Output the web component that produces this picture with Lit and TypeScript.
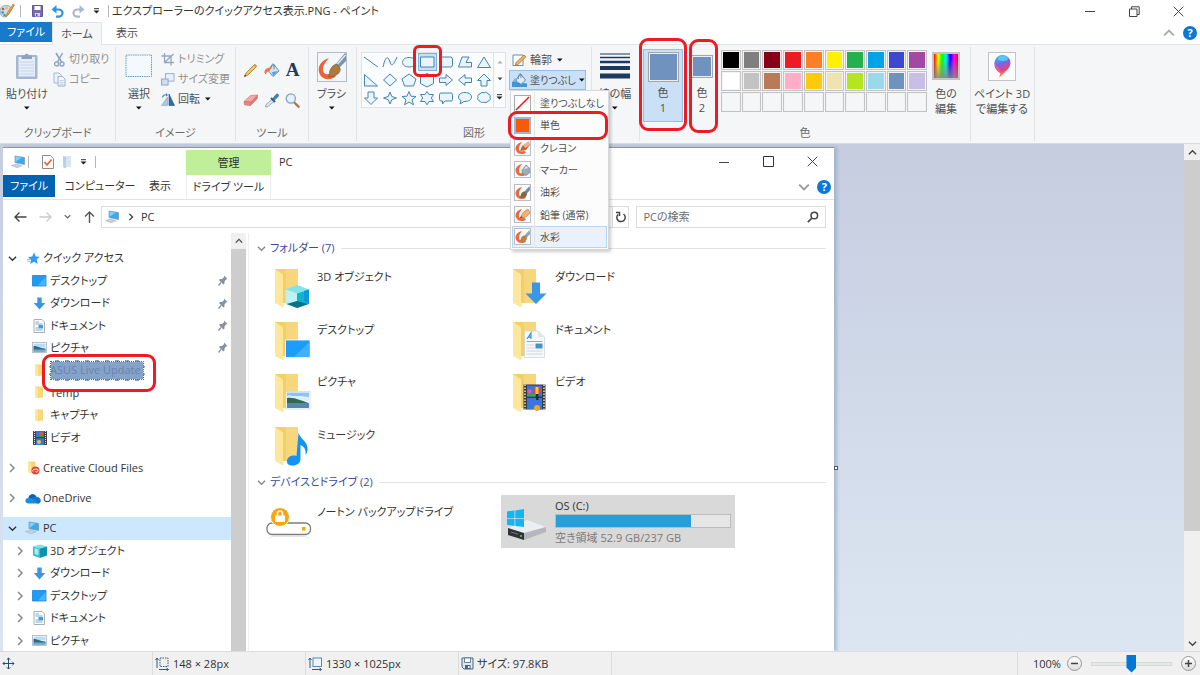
import { LitElement, html, svg, css, nothing, TemplateResult } from "lit";
import { customElement, state } from "lit/decorators.js";
import { classMap } from "lit/directives/class-map.js";
import { styleMap } from "lit/directives/style-map.js";

const icon = (w: number, h: number, body: unknown, vw = w, vh = h) =>
  html`<svg class="ic" width=${w} height=${h} viewBox="0 0 ${vw} ${vh}" fill="none" aria-hidden="true">${body}</svg>`;

const caret = () => icon(6, 4, svg`<path d="M0 .4h5.6L2.8 3.4z" fill="#111"/>`);
const chevron = (dir: "down" | "up" | "right", color: string, s = 8) => {
  const d = { down: "M1 3l4 4 4-4", up: "M1 7l4-4 4 4", right: "M3 1l4 4-4 4" }[dir];
  return icon(s, s, svg`<path d=${d} stroke=${color} stroke-width="1.5"/>`, 10, 10);
};

const paintApp = () => icon(16, 16, svg`
  <path d="M0 8c0-4 3-6 7-5.500 3 .3 5 2 4.500 4.500-.4 2-2.500 1.500-3 3-.4 2-1 4-4 4-3 0-4.500-2.500-4.500-6z" fill="#c9dcea" stroke="#7fa0b8" stroke-width=".8"/>
  <circle cx="3" cy="6" r="1.300" fill="#e04a3a"/><circle cx="6.500" cy="5" r="1.300" fill="#f5b92a"/><circle cx="2.600" cy="9.500" r="1.300" fill="#3b8fdc"/><circle cx="4.500" cy="12" r="1.200" fill="#43a94a"/>
  <path d="M13 1L7.500 9.500l-2 4.500 3.500-3L14.500 2z" fill="#e8993a" stroke="#a86820" stroke-width=".5"/>`);
const save = () => icon(11, 12, svg`
  <path d="M.5.5h10v11H.5z" fill="#7c6bb0" stroke="#64539a"/><path d="M2.500 1h6v4h-6z" fill="#fff"/><path d="M3 8h5v3.500H3z" fill="#d9d4ea"/><path d="M4 9h1.500v2H4z" fill="#64539a"/>`);
const undo = () => icon(13, 13, svg`
  <path d="M2 4.500h5.500a4 3.600 0 010 7.200H5" stroke="#2f94dd" stroke-width="2.200"/><path d="M5.500 0L.5 4.500l5 4z" fill="#2f94dd"/>`);
const redo = () => icon(13, 13, svg`
  <path d="M11 4.500H5.500a4 3.600 0 000 7.200H8" stroke="#a9b9cf" stroke-width="2.200"/><path d="M7.500 0l5 4.500-5 4z" fill="#a9b9cf"/>`);
const menuCaret = () => icon(7, 6, svg`<path d="M1 .7h5" stroke="#333"/><path d="M.5 2.500h6L3.500 5.500z" fill="#222"/>`);
const winMin = () => icon(10, 10, svg`<path d="M0 5.500h10" stroke="#444"/>`);
const winRestore = () => icon(11, 11, svg`<path d="M.5 3h7.500v7.500H.5zM2.500 3V.8h7.700v7.700H8" stroke="#444"/>`);
const winMax = () => icon(11, 11, svg`<path d="M.5.5h10v10H.5z" stroke="#333"/>`);
const winClose = () => icon(11, 11, svg`<path d="M.7.700l9.600 9.600M10.300.7L.7 10.300" stroke="#444"/>`);

const clipboard = () => icon(24, 28, svg`
  <rect x="1" y="3" width="21.500" height="24" rx="1.500" fill="#a5b6d2"/><rect x="3.500" y="5" width="16.500" height="19.500" fill="#e6edf8"/>
  <path d="M6.500 3.500h3a2.300 2.300 0 014.500 0h3V7h-10.500z" fill="#8fa2c0"/>
  <path d="M4.500 10h14.500M4.500 13h14.500M4.500 16h14.500M4.500 19h14.500M4.500 22h14.500" stroke="#c7d5ea"/>`);
const scissors = () => icon(13, 15, svg`
  <path d="M3 1l5.500 9M9.500 1L4.500 10" stroke="#8ba2c3" stroke-width="1.500"/><circle cx="3.600" cy="12" r="2" stroke="#8ba2c3" stroke-width="1.300"/><circle cx="9" cy="12" r="2" stroke="#8ba2c3" stroke-width="1.300"/>`);
const copy = () => icon(13, 15, svg`
  <path d="M1 1h5l2.500 2.500V11H1z" fill="#eef3fa" stroke="#a5b8d3"/><path d="M5 4.500h4.500L12 7v7H5z" fill="#f3f7fc" stroke="#9bb0ce"/><path d="M6.500 8.500h4M6.500 10.500h4M6.500 12.300h4" stroke="#c0cfe4"/>`);
const selectBox = () => icon(28, 24, svg`
  <rect x="1" y="1" width="25.500" height="21.500" fill="#f4f9fe" stroke="#6a9bc4" stroke-dasharray="1.500 .8"/>`);
const crop = () => icon(14, 13, svg`
  <path d="M3.500 0v9.500H13M.5 3h9.500v9.500M4 9L12.500 1" stroke="#90a6c4" stroke-width="1.300"/>`);
const resize = () => icon(14, 13, svg`
  <rect x="4.500" y=".6" width="8.500" height="7.500" fill="#e9f0f9" stroke="#9aafce"/><rect x=".6" y="6" width="6.500" height="6" fill="#d3dff0" stroke="#8fa6c8"/>`);
const rotate = () => icon(14, 13, svg`
  <path d="M6.500 12.500V4L.5 12.500z" fill="#a9c8e2" stroke="#7aa3c6" stroke-width=".6"/><path d="M8 12.500V1l5.500 11.500z" fill="#2f6f9e" stroke="#1d537c" stroke-width=".6"/><path d="M1.500 4.500C2 2 3.500 1.500 5.500 1.800" stroke="#3487c7" stroke-width="1.200"/><path d="M5 0l2 2-2 1.800z" fill="#3487c7"/>`);
const pencil = () => icon(15, 15, svg`
  <path d="M3 10L11.500 1.500l2 2L5 12l-3.500 1.500z" fill="#f0c45c" stroke="#9b7426" stroke-width=".7"/><path d="M11 2l1-1 2 2-1 1z" fill="#d9756c"/><path d="M1.200 13.800l.8-2.300 1.400 1.400z" fill="#333"/>`);
const bucket = () => icon(16, 15, svg`
  <path d="M5.500 5L10 1.500 15 8l-6 5.500L4.500 8z" fill="#d6e6f4" stroke="#4b82ae" stroke-width=".9"/><path d="M7 5.500c0-4 1.500-5 3-4v5" stroke="#587089" stroke-width=".8"/><path d="M.5 10C0 6.500 3.500 4 7.500 5L5 8.500c-2-.5-2.500 1-3 3z" fill="#e87c46"/><path d="M8 9l6-1-5 5z" fill="#4fa0dc"/>`);
const letterA = () => html`<span class="glyph-a">A</span>`;
const eraser = () => icon(16, 14, svg`
  <path d="M1 8.500L7.500 2.500l7-.5L8.500 9z" fill="#f5a8a4" stroke="#c96e6b" stroke-width=".6"/><path d="M1 8.500L8.500 9l-1 3.500-6-.5z" fill="#e98583" stroke="#c96e6b" stroke-width=".6"/><path d="M8.500 9l6-7-.2 3.500-6.800 7z" fill="#d97674" stroke="#c96e6b" stroke-width=".6"/>`);
const dropper = () => icon(16, 15, svg`
  <path d="M8 6.500l2 2-6 5-2.500.5.5-2.500z" fill="#d9e7f2" stroke="#7892a8" stroke-width=".7"/><path d="M7 5l4 4" stroke="#2a628f" stroke-width="2"/><path d="M8.500 6L12 1.500c1.500-1.500 3.500.5 2.200 2L10 7.500z" fill="#3a82bd" stroke="#2a628f" stroke-width=".6"/>`);
const magnifier = () => icon(15, 15, svg`
  <path d="M8.800 9l4.700 4.700" stroke="#a87950" stroke-width="2.400" stroke-linecap="round"/><circle cx="5.800" cy="5.500" r="4.600" fill="#e2f1fb" stroke="#8a9db2" stroke-width="1.200"/>`);
const brush = () => icon(30, 30, svg`
  <rect x=".5" y=".5" width="29" height="29" fill="#f2f6fa" stroke="#b4bcc6"/>
  <path d="M12 6C5 8 .5 14 2 20c1.500 7 10 10 17 4l-4-4c-4 4-8.500 2.500-9-1.500C5.500 14 8 10.500 12 6z" fill="#ee6132"/>
  <path d="M19 12L28 1l1 1v7l-7 7z" fill="#7a93ad"/><path d="M20.500 12l8-9" stroke="#dce8f3" stroke-width="1.500"/>
  <path d="M12 25c0-6 2-11 7-13l4 4c1 4-2 8-11 9z" fill="#ad7a40" stroke="#7b5427" stroke-width=".6"/>`);
const lineWeights = () => icon(30, 27, svg`
  <path d="M0 1h30" stroke="#1e3a5f"/><path d="M0 4.500h30" stroke="#1e3a5f" stroke-width="1.500"/><path d="M0 9h30" stroke="#1e3a5f" stroke-width="2.500"/><path d="M0 15h30" stroke="#1e3a5f" stroke-width="4"/><path d="M0 23h30" stroke="#1e3a5f" stroke-width="5"/>`);
const outline = () => icon(15, 13, svg`
  <path d="M1 1h10v10.500H1z" fill="#fbfdff" stroke="#5c93bd"/><path d="M4 8.500L12 1l2 1.800L6 10.500l-2.700.8z" fill="#f0b552" stroke="#a06e25" stroke-width=".7"/>`);
const fillIcon = () => icon(15, 15, svg`
  <path d="M0 9c3-1.500 6 2 10 1l5 .5V14H0z" fill="#3f96d6"/><path d="M5.500 4.500L9 1.500 13.500 7 9 11.500 4 8z" fill="#dcebf7" stroke="#4b82ae" stroke-width=".9"/><path d="M6.500 6c-.5-4 1-5.500 2.500-5v4" stroke="#587089" stroke-width=".8"/><path d="M1 9c0-3 2-4 4.500-4L4 9z" fill="#76b4e4"/>`);
const rainbow = () => html`<span class="rainbow"></span>`;
const paint3d = () => icon(28, 29, svg`
  <defs><linearGradient id="p3" x1="0" y1="0" x2=".3" y2="1"><stop offset="0" stop-color="#2fd0f5"/><stop offset=".45" stop-color="#6e6be8"/><stop offset=".75" stop-color="#e8417f"/><stop offset="1" stop-color="#fbb117"/></linearGradient></defs>
  <rect x=".5" y=".5" width="27" height="28" fill="#fbfbfb" stroke="#c4c4c4"/><path d="M11 26l1.500-5c-4-2-6.500-6-6-10a8 8 0 0116 0c0 6-6 9-11.500 15z" fill="url(#p3)"/><path d="M6.800 10c2 6 6 6 6.500 12l-.8-1c-4-2-6.500-6-5.700-11z" fill="#ee5a9c"/><ellipse cx="15" cy="6.500" rx="5" ry="2.500" fill="#5eeaf0" opacity=".6"/>`);

const SHAPES: string[] = [
  "M1 2l14 10", "M1 12C4-2 7 3 8 7s3 5 7-5", "M8 2.500c4 0 6.500 2 6.500 4.800S12 12 8 12s-6.500-2-6.500-4.700S4 2.500 8 2.500z",
  "M1.500 2h13.500v10H1.500z", "M4 2h8.500q2 0 2 2v6q0 2-2 2H4q-2 0-2-2V4q0-2 2-2z", "M5 2h7L9 7.500h5.500V12h-13z", "M8 2l6.500 10.500h-13z",
  "M1.500 1.500v11.500h13z", "M8 1l6.500 6L8 13 1.500 7z", "M8 1l7 5-2.500 7h-9L1 6z",
  "M8 .5l6.500 3.500v6.500L8 14l-6.500-3.500V4z", "M1.500 5H8V1.500L14.500 7 8 12.500V9.500H1.500z", "M14.500 5H8V1.500L1.500 7 8 12.500V9.500h6.500z", "M8 1l6.500 6.500H11V13H5V7.500H1.500z",
  "M5 1h6v6h3.500L8 13.500 1.500 7H5z", "M8 1l1.800 4.500L14.500 7 9.800 8.700 8 13 6.200 8.700 1.500 7l4.700-1.500z", "M8 .5l2 4.700 5 .3-4 3.300 1.500 5L8 11l-4.500 2.800 1.500-5-4-3.300 5-.3z",
  "M8 .5l2 3h4.500L12.300 7l2.200 3.500H10l-2 3.300-2-3.300H1.500L3.700 7 1.500 3.500H6z", "M3 2h10q1.500 0 1.500 1.500v5q0 1.500-1.500 1.500H7l-2.500 3V10H3Q1.500 10 1.500 8.500v-5Q1.500 2 3 2z",
  "M8 1.500c4 0 6.500 2 6.500 4.500S12 10.500 8 10.500l-1 0-4 2.500 1-3.500C2.300 8.700 1.500 7.500 1.500 6c0-2.500 2.500-4.500 6.500-4.500z",
  "M4 3c1-2 3-2 4-1 1.500-1.300 3.500-1 4 1 2 0 3 2 2 3.500 1 1.500 0 3.500-2 3.500-1 2-3 2-4 1-2 1-3.500.5-4-1-2 0-3-2-2-3.500C1 5 2 3 4 3z",
];
const shapeIcon = (d: string) => icon(16, 15, svg`<path d=${d} stroke="#4384b3" fill="#eaf5fb" stroke-width="1"/>`);

const PALETTE = ["#000000", "#7f7f7f", "#880015", "#ed1c24", "#ff7f27", "#fff200", "#22b14c", "#00a2e8", "#3f48cc", "#a349a4",
  "#ffffff", "#c3c3c3", "#b97a57", "#ffaec9", "#ffc90e", "#efe4b0", "#b5e61d", "#99d9ea", "#7092be", "#c8bfe7"];

const stroke = (tip: unknown) => icon(17, 17, svg`<rect x=".5" y=".5" width="16" height="16" fill="#fbfbfb" stroke="#b9bec5"/><path d="M8 3C3 4 .5 8 2 11.500c1.500 4 7 4.500 10 2l-2-2c-2 1.500-4.500 1-5-1C4.500 8 6 5.500 8 3z" fill="#e86a3e"/>${tip}`);
const FILLS: { label: string; art: TemplateResult }[] = [
  { label: "塗りつぶしなし", art: icon(17, 17, svg`<rect x=".5" y=".5" width="16" height="16" fill="#fff" stroke="#a9a9a9"/><path d="M2 15L15 2" stroke="#ed1c24" stroke-width="1.600"/>`) },
  { label: "単色", art: icon(17, 17, svg`<rect x="1" y="1" width="15" height="15" fill="#f85a08" stroke="#9db8d6" stroke-width="2"/>`) },
  { label: "クレヨン", art: stroke(svg`<path d="M6 12l2-5 6-4 2 3-4 5z" fill="#c5603a"/><path d="M9 6.500l6-4.500 1 4-4.500 3z" fill="#e9b48d"/>`) },
  { label: "マーカー", art: stroke(svg`<path d="M8 9l4-5 3.500 3v5l-3.500 2.500-4-2z" fill="#9eacba" stroke="#6f7d8b" stroke-width=".6"/><path d="M10 8l2-3 2 2z" fill="#e3e9ee"/>`) },
  { label: "油彩", art: stroke(svg`<path d="M10.500 7.500L15.500 2l.5 4-3.500 4z" fill="#6f8aa5"/><path d="M6 14c1-5 2-6.500 5-6.500l2 2c0 3-2 4.500-7 4.500z" fill="#7d6a4d"/>`) },
  { label: "鉛筆 (通常)", art: stroke(svg`<path d="M6 12.500l3-6L14 3l2 4-4 4z" fill="#efb277" stroke="#b8743a" stroke-width=".6"/><path d="M6 12.500l1.200-2.500 1.500 1.500z" fill="#6b4426"/>`) },
  { label: "水彩", art: stroke(svg`<path d="M10.500 7.500L15.500 2l.5 4-3.500 4z" fill="#8aa4be"/><path d="M6 14c1-5 2-6.500 5-6.500l2 2c0 3-2 4.500-7 4.500z" fill="#b98048"/>`) },
];

const pc = () => icon(16, 14, svg`
  <path d="M4 1l9.500 1.500v7L4 7.500z" fill="#3aaaf0" stroke="#7895ab" stroke-width=".7"/><path d="M4.500 1.500l6 1-6 4.500z" fill="#7fd0fa"/><path d="M.5 10.500l5-1.500 5.500 1.800-5 2z" fill="#c9d2da" stroke="#9ba8b3" stroke-width=".5"/>`);
const checkDoc = () => icon(12, 14, svg`
  <path d="M.5.5h8l3 3v10H.5z" fill="#fff" stroke="#8b8b8b"/><path d="M2.500 7l2.500 3 4.500-5.500" stroke="#e8622c" stroke-width="1.700"/>`);
const paleFolder = () => icon(10, 14, svg`<path d="M1 1h8v11H4z" fill="#d8e5f2"/><path d="M1 1l3 1.500v11L1 12z" fill="#b9cfe6"/>`);
const arrow = (dir: string, c: string) => icon(13, 12, svg`<path d=${dir === "up" ? "M6.500 12V1M2 5.500L6.500 1 11 5.500" : dir === "left" ? "M12.500 6H1M5.500 1.500L1 6l4.500 4.500" : "M.5 6H12M7.500 1.500L12 6l-4.500 4.500"} stroke=${c} stroke-width="1.400"/>`);
const refresh = () => icon(12, 12, svg`<path d="M3 3.500a4.200 4.200 0 105.500-.5M1 1.500h3.500V5" stroke="#444" stroke-width="1.500"/>`);
const search = () => icon(12, 12, svg`<circle cx="7.300" cy="4.500" r="3.300" stroke="#444" stroke-width="1.500"/><path d="M5 7L.8 11.200" stroke="#444" stroke-width="1.700"/>`);
const star = () => icon(13, 13, svg`<path d="M7 .5l1.700 4 4 .2-3 2.800 1 4.500L7 9.800l-3.800 2.200L4 8 1 5l4.200-.4z" fill="#2c9df0"/><path d="M0 7.500h3M.5 9.500h2.500" stroke="#7cc4f6"/>`);
const desktop = () => icon(15, 12, svg`<path d="M.5.5h13.500v10.500H.5z" fill="#1f9bf5" stroke="#1784d8" stroke-width=".8"/><path d="M6 10.500L13.500 2v8.500z" fill="#4cb5ff"/>`);
const download = () => icon(13, 13, svg`<path d="M4.300.5h4.400v5.500h3.600L6.500 12.500.7 6h3.600z" fill="#3a95e4"/>`);
const doc = () => icon(13, 14, svg`<path d="M1 .5h8L11.500 3v10.500H1z" fill="#fdfdfd" stroke="#9a9a9a" stroke-width=".8"/><path d="M2.500 3h3.500M2.500 5h7M2.500 11h7M2.500 9h3" stroke="#6fb1de"/><path d="M5.500 6h4.500v3.500H5.500z" fill="#4c98cf"/>`);
const picture = () => icon(15, 11, svg`<rect x=".5" y=".5" width="14" height="10" fill="#fff" stroke="#a9b4bd" stroke-width=".8"/><path d="M1.500 1.500h12v4h-12z" fill="#b6dcf6"/><path d="M1.500 4c4 0 6 2 12 2.500v3h-12z" fill="#2c6b85"/><path d="M1.500 7.500h12v2h-12z" fill="#74a8d2"/>`);
const folder = () => icon(11, 13, svg`<path d="M1 .5h8v11L4 12z" fill="#f8d775"/><path d="M1 .5l3 1.500v10.500L1 11.500z" fill="#fbe69e"/>`);
const video = () => icon(14, 14, svg`<rect width="14" height="14" fill="#444"/><path d="M1.500 0v14M12.500 0v14" stroke="#ddd" stroke-dasharray="1 1"/><path d="M3 0h8v6H3zM3 7.500h8V14H3z" fill="#3778d6"/><circle cx="8" cy="3" r="2" fill="#e9542e"/><circle cx="6" cy="11" r="2" fill="#f2c22f"/><path d="M7 4h3v2H7z" fill="#3a9b4a"/>`);
const ccFolder = () => icon(13, 14, svg`<path d="M1 .5h7.500v11L4 12z" fill="#f8d775"/><path d="M1 .5l3 1.500v10.500L1 11.500z" fill="#fbe69e"/><circle cx="8.500" cy="9.500" r="4" fill="#e2463a"/><path d="M6 10.500a1.500 1.500 0 012-2c1-1 3-.5 3 1s-1.500 2-2.500 1" stroke="#fff" stroke-width=".9"/>`);
const cloud = () => icon(16, 11, svg`<path d="M4 10.500C-1 10.500-.5 5 3.500 5 4 1 9.500-.5 11.500 4c5 0 5.500 6.500 1 6.500z" fill="#1490df"/><path d="M3.500 5C4 1 9.500-.5 11.500 4c-2 0-3 .5-4 1.500C6.500 5 5 4.700 3.500 5z" fill="#0a5fb4"/><path d="M11.500 4c5 0 5.500 6.500 1 6.500L7.500 5.500c1-1 2-1.500 4-1.500z" fill="#1478cf"/>`);
const cube = () => icon(14, 14, svg`<path d="M0 2.500L7 .5l7 2-7 2z" fill="#7fe0ea"/><path d="M0 2.500l7 2V14l-7-2.500z" fill="#35bccb"/><path d="M14 2.500l-7 2V14l7-2.500z" fill="#0d93ae"/><path d="M1.500 4l4 1.200v6L1.500 10z" fill="#a5edf3"/>`);
const pin = () => icon(10, 11, svg`<path d="M6 .5L9.500 4 8 4.500 6.500 6.500v2L5.300 9.500 1 5l1-1h2l2-1.700z" fill="#86929d"/><path d="M3 7.500L.5 10.500" stroke="#86929d" stroke-width="1.200"/>`);

const bigFolder = (overlay: unknown) => icon(38, 40, svg`
  <path d="M1 0h23v34H8z" fill="#f3cf69"/><path d="M12 0h12v34H12z" fill="#f7d67c"/><path d="M1 0l8 5.500v33L1 34z" fill="#fde79b"/><path d="M9 34.500v4l2.500-4z" fill="#eee"/>${overlay}`);
const BIG: Record<string, unknown> = {
  cube: svg`<path d="M11.500 20.500L23 16l12 4.500-12 4z" fill="#7fe4ec"/><path d="M11.500 20.500l11.500 4V39l-11.500-4z" fill="#bff0f2"/><path d="M35 20.500l-12 4V39l12-4z" fill="#0fb4cf"/><path d="M12.500 35L23 32l11 3-11 4z" fill="#0a7285"/><path d="M35 20.500l-5 1.500v10l5 2.500z" fill="#0b99dc"/>`,
  desktop: svg`<path d="M11.500 18h24.500v17.500H11.500z" fill="#1c9dfb" stroke="#fff" stroke-width=".8"/><path d="M20 35L35.500 20v15z" fill="#41b0ff"/>`,
  picture: svg`<path d="M12 17.500h24v17.500H12z" fill="#fff" stroke="#ccd5dc" stroke-width=".7"/><path d="M13 18.500h22v8H13z" fill="#8fc2f1"/><path d="M13 22c2-1 4-1 5 0h9l8 1v4H13z" fill="#dbeefa"/><path d="M13 24c8-1 14 3 22 5H13z" fill="#2f6a51"/><path d="M13 29h22v5H13z" fill="#5586b5"/>`,
  music: svg`<path d="M24.500 5.500c1 6 9.500 9 9 16.500 0 3-1 5-2 6 1-7-3-9-5-10v14c0 4-3.500 6.500-8 6.500-4 0-6-2-5.500-5 .5-4 6-6 9.500-4.500z" fill="#1293f5"/>`,
  download: svg`<path d="M20 13.500h8v11h6.500L24 35 13.500 24.500H20z" fill="#3a96e6"/>`,
  doc: svg`<path d="M12.500 9h13.500l6.500 6v20.500h-20z" fill="#f6f9fb" stroke="#c9d1d7" stroke-width=".7"/><path d="M26 9v6h6.500z" fill="#dde5eb"/><path d="M15 17l4-6v6M16.500 15h3" stroke="#3d9be0" stroke-width="1.300"/><path d="M14.500 19.500h16" stroke="#6fb6e8"/><path d="M14.500 23h8M14.500 26h8M14.500 29h16M14.500 32h16" stroke="#cfd6db"/><path d="M23.500 21.500h7v5h-7z" fill="#4594c6"/>`,
  video: svg`<path d="M11.500 10.500h22v25h-22z" fill="#393939"/><path d="M13 10.500v25M32 10.500v25" stroke="#e3e3e3" stroke-width="1.500" stroke-dasharray="1.500 1.500"/><path d="M15 11.500h15v11H15zM15 24h15v11H15z" fill="#3b76e0"/><circle cx="25" cy="16.500" r="3.800" fill="#e8442a"/><path d="M23.500 13h3v7h-3z" fill="#f7cf34"/><circle cx="17.500" cy="17.500" r="2.200" fill="#e05ca8"/><path d="M15 20h8v2.500h-8z" fill="#3ca550"/><path d="M24 20h2.500v6H24z" fill="#2c2c2c"/><circle cx="25" cy="34" r="3" fill="#f0a62a"/>`,
};
const lockDrive = () => icon(46, 32, svg`
  <rect x="1" y="16" width="43.500" height="11.500" rx="5" fill="#fff" stroke="#7d7d7d" stroke-width="1.300"/><circle cx="14" cy="10" r="9.500" fill="#f8a50f" stroke="#fff"/><path d="M9 8.500h10V15H9z" fill="#fff"/><path d="M11.500 9V6.500a2.500 2.500 0 015 0V9" stroke="#fff" stroke-width="1.500"/><rect x="36" y="20" width="3.500" height="3.500" fill="#f8a50f"/><path d="M3 31l3-1.500h33l4 1.500" stroke="#e4e4e4"/>`);
const osDrive = () => icon(40, 32, svg`
  <path d="M1 19l19-8 19 7-22 7z" fill="#eceef1"/><path d="M1 19l16 5v7L1 26z" fill="#303438"/><path d="M17 24l22-6v5L17 31z" fill="#b4b8be"/><path d="M4 23l7 2.200" stroke="#777"/><circle cx="14" cy="27" r="1" fill="#49e040"/>
  <path d="M0 2.500l7.500-1V9H0zM8.300 1.400L17 0v9H8.300zM0 9.800h7.500v7.100L0 16zM8.300 9.800H17V18l-8.700-1z" fill="#12b7f2"/>`);

const moveIcon = () => icon(13, 13, svg`<path d="M6.500 1v11M1 6.500h11M4.800 2.700L6.500 1l1.700 1.700M4.800 10.300L6.500 12l1.700-1.700M2.700 4.800L1 6.500l1.700 1.700M10.300 4.800L12 6.500l-1.700 1.700" stroke="#2c4a6a"/>`);
const selSize = () => icon(15, 14, svg`<path d="M2 11V1M.5 3L2 1l1.500 2M4 12.500h9.500M11.500 11l2 1.500-2 1.500" stroke="#3a5878"/><rect x="5" y="1" width="8" height="8.500" stroke="#3a5878" stroke-dasharray="1.500 1"/>`);
const imgSize = () => icon(15, 14, svg`<path d="M2 11V1M.5 3L2 1l1.500 2M4 12.500h9.500M11.500 11l2 1.500-2 1.500" stroke="#3a5878"/><rect x="5" y="1" width="8.500" height="8.500" fill="#eaf5fc" stroke="#5c89ad"/>`);
const disk = () => icon(13, 13, svg`<path d="M1 1h11v11H3L1 10z" fill="#dbe7f1" stroke="#4a6480"/><path d="M3.500 1h6v4.500h-6z" fill="#fff" stroke="#4a6480" stroke-width=".8"/><path d="M4 8h5.500v4H4z" fill="#4a6480"/><path d="M7 9h1.500v2H7z" fill="#fff"/>`);

interface NavRow { label: string; art: () => TemplateResult; pinned?: boolean; level?: number; open?: boolean; closed?: boolean; current?: boolean; covered?: boolean }
const NAV: NavRow[][] = [
  [
    { label: "クイック アクセス", art: star, open: true },
    { label: "デスクトップ", art: desktop, level: 1, pinned: true },
    { label: "ダウンロード", art: download, level: 1, pinned: true },
    { label: "ドキュメント", art: doc, level: 1, pinned: true },
    { label: "ピクチャ", art: picture, level: 1, pinned: true },
    { label: "ASUS Live Update", art: folder, level: 1, covered: true },
    { label: "Temp", art: folder, level: 1 },
    { label: "キャプチャ", art: folder, level: 1 },
    { label: "ビデオ", art: video, level: 1 },
  ],
  [{ label: "Creative Cloud Files", art: ccFolder, closed: true }],
  [{ label: "OneDrive", art: cloud, closed: true }],
  [
    { label: "PC", art: pc, open: true, current: true },
    { label: "3D オブジェクト", art: cube, level: 1, closed: true },
    { label: "ダウンロード", art: download, level: 1, closed: true },
    { label: "デスクトップ", art: desktop, level: 1, closed: true },
    { label: "ドキュメント", art: doc, level: 1, closed: true },
    { label: "ピクチャ", art: picture, level: 1, closed: true },
  ],
];
const FOLDERS: [string, string][] = [
  ["3D オブジェクト", "cube"], ["ダウンロード", "download"], ["デスクトップ", "desktop"], ["ドキュメント", "doc"],
  ["ピクチャ", "picture"], ["ビデオ", "video"], ["ミュージック", "music"],
];

const base = css`
  * { box-sizing: border-box; }
  button, input { font: inherit; font-feature-settings: inherit; color: inherit; border: 0; background: none; margin: 0; padding: 0; border-radius: 0; }
  button { display: flex; align-items: center; justify-content: center; white-space: nowrap; }
  .ic { display: block; flex: none; }
  .mark { position: absolute; border: 3px solid #ed1c24; border-radius: 9px; pointer-events: none; z-index: 5; }
  .help { width: 14px; height: 14px; border-radius: 50%; background: #0a78d7; color: #fff; font-weight: 700; line-height: 14px; }
  .sep { width: 1px; height: 12px; background: #b5b5b5; }
  .grow { flex: 1; }
  .scroll { display: flex; flex-direction: column; align-items: stretch; background: #f0f0f0; }
  .scroll button { height: 16px; }
  .thumb { background: #cdcdcd; }
`;

@customElement("file-explorer")
export class FileExplorer extends LitElement {
  static styles = [base, css`
    :host { display: flex; flex-direction: column; background: #fff; color: #333; min-height: 0; border-top: 1px solid #8f97a5; }
    .top { display: grid; grid-template-columns: 183px 85px 1fr; grid-template-rows: 27px 24px; border-bottom: 1px solid #e3e3e3; }
    .quick { display: flex; align-items: center; gap: 8px; padding-left: 8px; }
    .quick .first { margin: 0 5px 0 -7px; }
    .manage { background: #bff099; margin-top: 2px; }
    .caption { display: flex; align-items: center; padding-left: 8px; }
    .win { width: 44px; height: 26px; }
    .tabs { display: flex; align-items: stretch; }
    .tabs button { margin-bottom: 2px; }
    .file { width: 52px; background: #0163b1; color: #fff; }
    .tab-computer { width: 90px; }
    .tab-view { width: 30px; }
    .drive { border: 1px solid #ececec; border-width: 0 1px; }
    .aside { display: flex; align-items: center; justify-content: flex-end; gap: 7px; padding: 0 3px 0 0; }
    .address { display: flex; align-items: center; height: 33px; padding: 0 8px 0 11px; gap: 11px; }
    .path { flex: 1; display: flex; align-items: center; height: 22px; border: 1px solid #dcdcdc; padding-left: 3px; gap: 6px; }
    .path .reload { width: 16px; height: 20px; border-left: 1px solid #dcdcdc; }
    .nav-btns { display: flex; align-items: center; gap: 12px; width: 76px; }
    .find { display: flex; align-items: center; width: 190px; height: 22px; border: 1px solid #dcdcdc; padding: 0 6px; margin-left: -4px; }
    .find input { flex: 1; min-width: 0; outline: 0; }
    .find input::placeholder { color: #6d6d6d; opacity: 1; }
    .body { flex: 1; display: flex; min-height: 0; }
    nav { width: 228px; display: flex; flex-direction: column; gap: 8px; padding-top: 14px; overflow: hidden; }
    .block { display: grid; grid-auto-rows: 1fr; flex: none; }
    .block-9 { height: 202px; } .block-1 { height: 22px; } .block-6 { height: 135px; }
    .row { display: flex; align-items: center; gap: 2px; padding-left: 4px; position: relative; }
    .row.level { padding-left: 12px; }
    .row.current { background: #cce8ff; }
    .twist { width: 10px; display: flex; justify-content: center; margin-right: 6px; }
    .level .twist { margin-right: 4px; }
    .slot { width: 16px; display: flex; justify-content: center; }
    .level .slot { width: 17px; }
    .row a, .tile a { color: inherit; text-decoration: none; white-space: nowrap; }
    .pin { margin-left: auto; margin-right: 3px; }
    .cover { position: absolute; left: 46px; top: 1px; width: 96px; height: 21px; background: #7092bed9; border: 2px dashed #fff; outline: 1px dotted #2e6fb5; outline-offset: -2px; }
    .row .mark { left: 39px; right: 75px; top: -5px; bottom: -10px; }
    .side-scroll { width: 15px; }
    .side-scroll .thumb { flex: 1; }
    main { flex: 1; border-left: 1px solid #f0f0f0; margin-left: 2px; padding: 5px 8px 0 8px; }
    .head { display: flex; align-items: center; gap: 4px; height: 20px; color: #3a4a9b; font-weight: 400; font-size: 11px; margin: 0; }
    .head .rule { flex: 1; height: 1px; background: #e2e2e2; margin-left: 2px; }
    .tiles { display: grid; grid-template-columns: 234px 234px; gap: 0 4px; padding-left: 6px; margin-top: 4px; grid-auto-rows: 1fr; }
    .folders { height: 210px; }
    .drives { height: 53px; margin-top: 3px; }
    .tile { display: flex; align-items: flex-start; padding: 7px 4px 0 6px; gap: 5px; line-height: 16px; }
    .pic { width: 43px; display: flex; justify-content: flex-end; }
    .pic.wide { margin: 3px 0 0 -3px; width: 46px; }
    .drives .tile { padding-top: 9px; }
    .drives .on { background: #d9d9d9; padding-top: 3px; }
    .on .pic { padding-top: 11px; justify-content: flex-start; }
    .info { flex: 1; }
    progress { display: block; appearance: none; width: 100%; height: 14px; border: 1px solid #bcbcbc; background: #e6e6e6; }
    progress::-webkit-progress-bar { background: #e6e6e6; }
    progress::-webkit-progress-value { background: #26a0da; }
    .free { color: #7a7a7a; display: block; margin-top: 2px; }
  `];

  row(r: NavRow) {
    return html`<div class=${classMap({ row: true, level: !!r.level, current: !!r.current })}>
      <span class="twist">${r.open ? chevron("down", "#333", 9) : r.closed ? chevron("right", "#8a8a8a", 10) : nothing}</span>
      <span class="slot">${r.art()}</span><a href="#">${r.label}</a>
      ${r.pinned ? html`<span class="pin">${pin()}</span>` : nothing}
      ${r.covered ? html`<span class="cover"></span><span class="mark"></span>` : nothing}
    </div>`;
  }

  render() {
    return html`
      <div class="top">
        <div class="quick">${pc()}<span class="sep first"></span><button aria-label="プロパティ">${checkDoc()}</button><button aria-label="新しいフォルダー">${paleFolder()}</button><button aria-label="カスタマイズ">${menuCaret()}</button><span class="sep"></span></div>
        <button class="manage">管理</button>
        <div class="caption"><span class="grow">PC</span><button class="win" aria-label="最小化">${winMin()}</button><button class="win" aria-label="最大化">${winMax()}</button><button class="win" aria-label="閉じる">${winClose()}</button></div>
        <div class="tabs"><button class="file">ファイル</button><button class="tab-computer">コンピューター</button><button class="tab-view">表示</button></div>
        <button class="drive">ドライブ ツール</button>
        <div class="aside">${chevron("down", "#999", 12)}<button class="help" aria-label="ヘルプ">?</button></div>
      </div>
      <div class="address">
        <div class="nav-btns"><button aria-label="戻る">${arrow("left", "#444")}</button><button aria-label="進む">${arrow("right", "#ccc")}</button><button aria-label="履歴">${chevron("down", "#555", 7)}</button><button aria-label="上へ">${arrow("up", "#555")}</button></div>
        <div class="path">${pc()}${chevron("right", "#333")}<span class="grow">PC</span><button class="reload" aria-label="更新">${refresh()}</button></div>
        <div class="find"><input aria-label="PCの検索" placeholder="PCの検索" />${search()}</div>
      </div>
      <div class="body">
        <nav>${NAV.map((b) => html`<div class="block block-${b.length}">${b.map((r) => this.row(r))}</div>`)}</nav>
        <div class="scroll side-scroll"><button aria-label="上へスクロール">${chevron("up", "#444")}</button><div class="thumb"></div></div>
        <main>
          <h2 class="head">${chevron("down", "#888", 9)}フォルダー (7)<span class="rule"></span></h2>
          <div class="tiles folders">${FOLDERS.map(([n, k]) => html`<div class="tile"><span class="pic">${bigFolder(BIG[k])}</span><a href="#">${n}</a></div>`)}</div>
          <h2 class="head">${chevron("down", "#888", 9)}デバイスとドライブ (2)<span class="rule"></span></h2>
          <div class="tiles drives">
            <div class="tile"><span class="pic wide">${lockDrive()}</span><a href="#">ノートン バックアップドライブ</a></div>
            <div class="tile on"><span class="pic">${osDrive()}</span><div class="info"><label for="cap">OS (C:)</label><progress id="cap" max="237" value="184.1"></progress><span class="free">空き領域 52.9 GB/237 GB</span></div></div>
          </div>
        </main>
      </div>`;
  }
}

@customElement("app-root")
export class AppRoot extends LitElement {
  @state() private zoom = 50;

  static styles = [base, css`
    :host {
      display: grid; grid-template-rows: 22px 23px 99px minmax(0, 1fr) 24px; height: 100vh; overflow: hidden;
      font-family: "Open Sans", "Noto Sans CJK JP", sans-serif; font-size: 11px; line-height: 16px; font-feature-settings: "palt"; color: #505050; background: #fff;
      border-bottom: 1px solid #444;
    }
    .title { display: flex; align-items: center; gap: 8px; color: #333; }
    .title .win { width: 44px; height: 22px; }
    .title .wins { display: flex; margin-left: auto; }
    .title .first { margin-left: -4px; }
    .title .name { margin-left: -5px; }
    .title .save { margin-left: 3px; }
    .tabs { display: flex; align-items: stretch; border-bottom: 1px solid #e2e3e4; }
    .tabs .file { width: 52px; margin-bottom: 2px; background: #1979ca; color: #fff; }
    .tabs .home { width: 50px; background: #f5f6f7; border: 1px solid #e2e3e4; border-bottom: 0; margin-bottom: -1px; }
    .tabs .view { width: 50px; }
    .tabs .aside { display: flex; align-items: center; gap: 8px; margin-left: auto; padding-right: 3px; }
    .ribbon { display: flex; background: #f5f6f7; border-bottom: 1px solid #d9dadb; padding-bottom: 2px; min-width: 0; }
    .group { display: flex; flex-direction: column; border-right: 1px solid #e2e3e4; position: relative; margin-top: 2px; flex: none; }
    .content { flex: 1; display: flex; padding-top: 5px; min-height: 0; align-items: flex-start; }
    .label { text-align: center; color: #6a6a6a; height: 16px; line-height: 16px; }
    .g-clip { width: 116px; } .g-image { width: 120px; } .g-tools { width: 73px; } .g-brush { width: 48px; }
    .g-shapes { width: 235px; } .g-width { width: 48px; } .g-color { width: 331px; } .g-3d { width: 64px; }
    .big { flex-direction: column; justify-content: flex-start; width: 46px; line-height: 15px; white-space: normal; }
    .big .art { height: 34px; display: flex; align-items: flex-start; }
    .big .drop { margin-top: 5px; }
    .g-clip .big { margin-left: 4px; }
    .g-image .big { padding-top: 2px; }
    .g-image .big .art { height: 32px; }
    .g-brush .big { width: 45px; }
    .g-width .big { width: 46px; padding-top: 1px; }
    .g-width .big .art { height: 33px; }
    .list { display: flex; flex-direction: column; }
    .small { height: 20px; gap: 3px; justify-content: flex-start; padding-left: 1px; }
    .small .caret { margin-left: 2px; }
    .off { color: #929292; }
    .g-clip .list { margin-left: 2px; margin-top: -3px; }
    .g-image .list { margin-top: -3px; margin-left: -2px; }
    .tools { display: grid; grid-template: 30px 30px / repeat(3, 21px); margin: 3px 0 0 4px; }
    .glyph-a { font: 700 19px "Liberation Serif", serif; color: #1f3a5f; }
    .gallery { display: flex; margin-left: 4px; width: 145px; height: 56px; border: 1px solid #dfe3e8; background: #fbfcfd; }
    .shapes { flex: 1; display: grid; grid-template-columns: repeat(7, 1fr); grid-auto-rows: 1fr; }
    .shapes button { position: relative; min-width: 0; min-height: 0; }
    .shapes .on { background: #c9dff6; outline: 1px solid #80b0e0; outline-offset: -1px; }
    .shapes .mark { inset: -8px -5px -6px -5px; border-radius: 6px; }
    .more { display: grid; width: 12px; border-left: 1px solid #dfe3e8; }
    .g-shapes .list { margin-left: 3px; margin-top: -2px; }
    .g-shapes .small { width: 77px; padding-left: 3px; position: relative; }
    .picker { position: relative; font-size: 10px; }
    .picker .active { background: #c9e0f7; outline: 1px solid #92c0e8; outline-offset: -1px; }
    .menu { position: absolute; z-index: 4; left: 1px; top: 20px; width: 99px; height: 160px; display: grid; grid-template-columns: minmax(0, 1fr); grid-auto-rows: 1fr; background: #fcfcfd; border: 1px solid #d6d9dc; box-shadow: 2px 2px 3px #0003; padding: 1px; }
    .menu button { position: relative; justify-content: flex-start; gap: 9px; min-height: 0; padding-left: 2px; }
    .menu button::before { content: ""; position: absolute; left: 22px; top: 0; bottom: 0; width: 1px; background: #e3e4e6; }
    .menu .hover { background: #e9f2fc; outline: 1px solid #b5d5f3; outline-offset: -1px; }
    .menu .mark { inset: -3px -1px -3px -4px; }
    .color-btn { position: relative; flex-direction: column; justify-content: flex-start; height: 73px; margin-top: -3px; line-height: 15px; }
    .c1 { width: 40px; margin-left: 3px; padding-top: 2px; background: #c9e0f7; border: 1px solid #92c0e8; }
    .c2 { width: 22px; margin-left: 8px; padding-top: 6px; }
    .swatch { background: #7092be; border: 1px solid #a6a6a6; box-shadow: inset 0 0 0 1px #eee; }
    .c1 .swatch { width: 31px; height: 30px; margin-bottom: 3px; }
    .c2 .swatch { width: 22px; height: 23px; margin-bottom: 7px; }
    .c1 .mark { inset: -12px -5px -10px -5px; }
    .c2 .mark { inset: -10px -5px -11px -2px; }
    .palette { display: grid; grid-template-columns: repeat(10, 1fr); grid-template-rows: repeat(3, 20px); gap: 1px; width: 206px; margin: -2px 0 0 8px; }
    .palette button { border: 1px solid #c3c3c3; box-shadow: inset 0 0 0 1px #f3f3f3; }
    .g-color .edit { width: 38px; }
    .rainbow { display: block; width: 28px; height: 28px; border: 2px solid #c3c3c3; background: linear-gradient(transparent 20%, #888d), linear-gradient(90deg, red, #ff0, lime, cyan, blue, magenta, red); }
    .g-3d .big { width: 62px; }
    .work { display: flex; min-height: 0; background: linear-gradient(#c5cddf, #dce6f2); }
    .canvas { flex: 1; display: flex; min-width: 0; padding: 3px 0 0 3px; overflow: hidden; position: relative; }
    file-explorer { width: 70.400%; box-shadow: 3px 0 3px #8fa3bf99; }
    .grip { align-self: flex-start; margin-top: 319px; width: 4px; height: 4px; border: 1px solid #555; background: #fff; z-index: 2; }
    .page-scroll { width: 16px; }
    .page-scroll .thumb { flex: 371; }
    .page-scroll .rest { flex: 104; }
    .status { display: flex; background: #f0f0f0; border-top: 1px solid #dcdcdc; color: #333; }
    .cell { width: 153px; display: flex; align-items: center; gap: 3px; padding-left: 2px; border-right: 1px solid #dcdcdc; }
    .zoom { display: flex; align-items: center; margin-left: auto; width: 183px; padding-left: 15px; border-left: 1px solid #dcdcdc; gap: 6px; }
    .round { width: 15px; height: 15px; border: 1px solid #999; border-radius: 50%; background: linear-gradient(#fff, #ddd); }
    input[type="range"] { appearance: none; width: 81px; height: 18px; margin: 0 3px; }
    input[type="range"]::-webkit-slider-runnable-track { height: 4px; background: #e5e8e8; border: 1px solid #d8dada; }
    input[type="range"]::-webkit-slider-thumb { appearance: none; width: 10px; height: 18px; margin-top: -8px; background: #0078d7; clip-path: polygon(0 0, 100% 0, 100% 72%, 50% 100%, 0 72%); }
  `];

  render() {
    return html`
      <header class="title">
        ${paintApp()}<span class="sep first"></span><button class="save" aria-label="保存">${save()}</button><button aria-label="元に戻す">${undo()}</button><button aria-label="やり直し">${redo()}</button><button aria-label="カスタマイズ">${menuCaret()}</button><span class="sep"></span>
        <span class="name">エクスプローラーのクイックアクセス表示.PNG - ペイント</span>
        <span class="wins"><button class="win" aria-label="最小化">${winMin()}</button><button class="win" aria-label="元のサイズ">${winRestore()}</button><button class="win" aria-label="閉じる">${winClose()}</button></span>
      </header>
      <div class="tabs">
        <button class="file">ファイル</button><button class="home">ホーム</button><button class="view">表示</button>
        <span class="aside">${chevron("up", "#aaa", 12)}<button class="help" aria-label="ヘルプ">?</button></span>
      </div>
      <div class="ribbon">
        <section class="group g-clip"><div class="content">
          <button class="big"><span class="art">${clipboard()}</span>貼り付け<span class="drop">${caret()}</span></button>
          <div class="list"><button class="small off">${scissors()}切り取り</button><button class="small off">${copy()}コピー</button></div>
        </div><div class="label">クリップボード</div></section>
        <section class="group g-image"><div class="content">
          <button class="big"><span class="art">${selectBox()}</span>選択<span class="drop">${caret()}</span></button>
          <div class="list"><button class="small off">${crop()}トリミング</button><button class="small off">${resize()}サイズ変更</button><button class="small">${rotate()}回転<span class="caret">${caret()}</span></button></div>
        </div><div class="label">イメージ</div></section>
        <section class="group g-tools"><div class="content"><div class="tools">
          <button aria-label="鉛筆">${pencil()}</button><button aria-label="塗りつぶし">${bucket()}</button><button aria-label="テキスト">${letterA()}</button>
          <button aria-label="消しゴム">${eraser()}</button><button aria-label="色の選択">${dropper()}</button><button aria-label="拡大鏡">${magnifier()}</button>
        </div></div><div class="label">ツール</div></section>
        <section class="group g-brush"><div class="content"><button class="big"><span class="art">${brush()}</span>ブラシ<span class="drop">${caret()}</span></button></div></section>
        <section class="group g-shapes"><div class="content">
          <div class="gallery"><div class="shapes">${SHAPES.map((d, i) => html`<button class=${classMap({ on: i === 3 })} aria-label="図形 ${i + 1}">${shapeIcon(d)}${i === 3 ? html`<span class="mark"></span>` : nothing}</button>`)}</div>
            <div class="more"><button aria-label="上">${icon(6, 4, svg`<path d="M.5 3.500h5L3 .8z" fill="#aaa"/>`)}</button><button aria-label="下">${icon(6, 4, svg`<path d="M.5.5h5L3 3.200z" fill="#444"/>`)}</button><button aria-label="その他">${menuCaret()}</button></div></div>
          <div class="list"><button class="small">${outline()}輪郭<span class="caret">${caret()}</span></button>
            <div class="picker"><button class="small active">${fillIcon()}塗りつぶし${caret()}</button>
              <div class="menu">${FILLS.map((f, i) => html`<button class=${classMap({ hover: i === 6 })}>${f.art}${f.label}${i === 1 ? html`<span class="mark"></span>` : nothing}</button>`)}</div></div></div>
        </div><div class="label">図形</div></section>
        <section class="group g-width"><div class="content"><button class="big"><span class="art">${lineWeights()}</span>線の幅<span class="drop">${caret()}</span></button></div></section>
        <section class="group g-color"><div class="content">
          <button class="color-btn c1"><span class="swatch"></span>色<br />1<span class="mark"></span></button>
          <button class="color-btn c2"><span class="swatch"></span>色<br />2<span class="mark"></span></button>
          <div class="palette">${Array.from({ length: 30 }, (_, i) => html`<button aria-label="色 ${i + 1}" style=${styleMap({ background: PALETTE[i] ?? "#f5f6f7" })}></button>`)}</div>
          <button class="big edit"><span class="art">${rainbow()}</span>色の<br />編集</button>
        </div><div class="label">色</div></section>
        <section class="group g-3d"><div class="content"><button class="big"><span class="art">${paint3d()}</span>ペイント 3D<br />で編集する</button></div></section>
      </div>
      <div class="work">
        <div class="canvas"><file-explorer></file-explorer><span class="grip"></span></div>
        <div class="scroll page-scroll"><button aria-label="上へスクロール">${chevron("up", "#444", 9)}</button><div class="thumb"></div><div class="rest"></div><button aria-label="下へスクロール">${chevron("down", "#444", 9)}</button></div>
      </div>
      <footer class="status">
        <span class="cell">${moveIcon()}</span><span class="cell">${selSize()}148 × 28px</span><span class="cell">${imgSize()}1330 × 1025px</span><span class="cell">${disk()}サイズ: 97.8KB</span>
        <span class="zoom"><label for="zoom">100%</label><button class="round" aria-label="縮小">${icon(9, 9, svg`<path d="M1 4.500h7" stroke="#444" stroke-width="1.500"/>`)}</button>
          <input id="zoom" type="range" min="0" max="100" .value=${String(this.zoom)} @input=${(e: Event) => (this.zoom = Number((e.target as HTMLInputElement).value))} />
          <button class="round" aria-label="拡大">${icon(9, 9, svg`<path d="M1 4.500h7M4.500 1v7" stroke="#444" stroke-width="1.500"/>`)}</button></span>
      </footer>`;
  }
}
